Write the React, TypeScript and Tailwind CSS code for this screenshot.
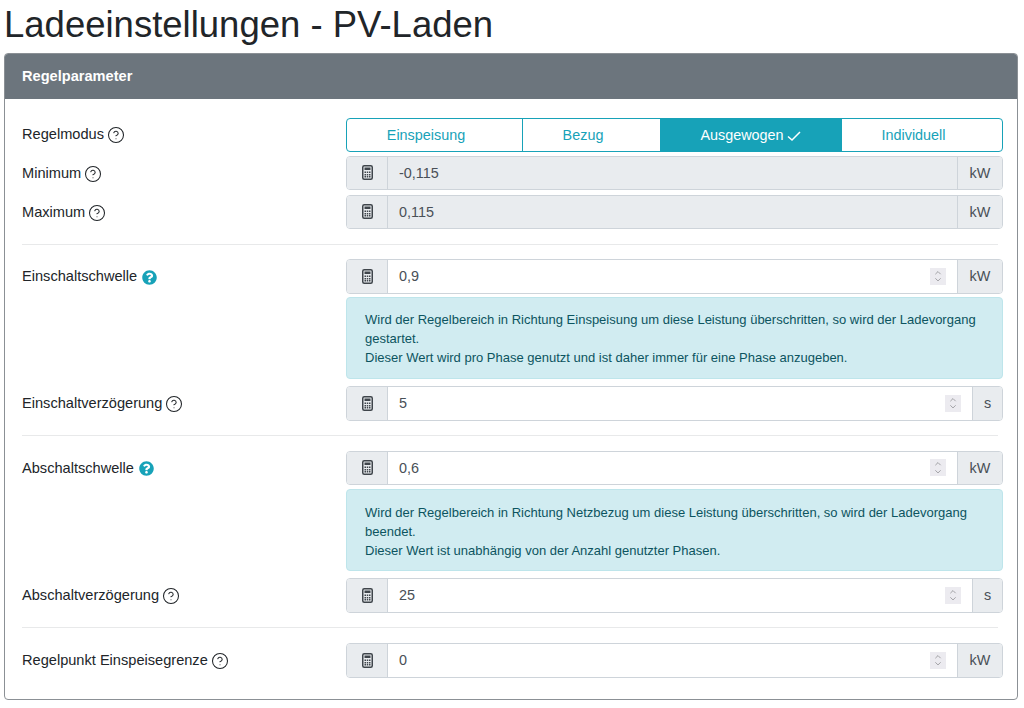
import { ChevronDown, ChevronUp, CircleHelp } from 'lucide-react';
import { FaQuestionCircle } from 'react-icons/fa';

function Calculator() {
  return (
    <svg width="11" height="15" viewBox="0 0 11 15" className="text-[#3f454b]">
      <rect x="0.75" y="0.75" width="9.5" height="13.5" rx="1.5" fill="none" stroke="currentColor" strokeWidth="1.5" />
      <rect x="2.5" y="2.5" width="6" height="2.5" fill="currentColor" />
      <path d="M2.5 6.5h1.5v1.5H2.5zM4.75 6.5h1.5v1.5h-1.5zM7 6.5h1.5v1.5H7zM2.5 9h1.5v1.5H2.5zM4.75 9h1.5v1.5h-1.5zM7 9h1.5v1.5H7zM2.5 11h1.5v1.5H2.5zM4.75 11h1.5v1.5h-1.5zM7 11h1.5v1.5H7z" fill="currentColor" />
    </svg>
  );
}

function Label({ text, active, first }: { text: string; active?: boolean; first?: boolean }) {
  return (
    <div className={`flex items-center h-[34.5px] ${first ? 'pt-0' : 'pt-[2px]'} text-[14.6px] text-[#212529] ${active ? 'gap-[5px]' : 'gap-[3px]'}`}>
      <span>{text}</span>
      {active ? (
        <FaQuestionCircle className="w-[15px] h-[15px] text-[#17a2b8]" />
      ) : (
        <CircleHelp size={18} strokeWidth={1.4} className="text-[#212529]" />
      )}
    </div>
  );
}

function Field({ value, unit, disabled }: { value: string; unit: string; disabled?: boolean }) {
  return (
    <div className="flex h-[34.5px] rounded-[4px] border border-[#ced4da] text-[14.4px] text-[#495057] overflow-hidden">
      <div className="w-[41px] shrink-0 flex items-center justify-center bg-[#e9ecef] border-r border-[#ced4da]">
        <Calculator />
      </div>
      <div className={`flex-1 flex items-center pl-[11px] pr-[11px] ${disabled ? 'bg-[#e9ecef]' : 'bg-white'}`}>
        <span className="flex-1 pt-[2px]">{value}</span>
        {!disabled && (
          <div className="w-[16px] h-[17px] bg-[#ecebf0] flex flex-col items-center justify-center text-[#6f6f73]">
            <ChevronUp size={10} strokeWidth={1.5} className="-mb-[1px]" />
            <ChevronDown size={10} strokeWidth={1.5} className="-mt-[1px]" />
          </div>
        )}
      </div>
      <div className={`${unit === 's' ? 'w-[30px]' : 'w-[45px]'} shrink-0 flex items-center justify-center pt-[2px] bg-[#e9ecef] border-l border-[#ced4da]`}>
        {unit}
      </div>
    </div>
  );
}

function Note({ lines, className }: { lines: string[]; className: string }) {
  return (
    <div className={`rounded-[4px] bg-[#d1ecf1] border border-[#bee5eb] pl-[18px] pr-[18px] pt-[12.5px] text-[13px] leading-[19px] text-[#0c5460] ${className}`}>
      {lines.map((l) => (
        <div key={l}>{l}</div>
      ))}
    </div>
  );
}

function Row({ label, active, first, className, children }: { label: string; active?: boolean; first?: boolean; className?: string; children: React.ReactNode }) {
  return (
    <div className={`grid grid-cols-[324px_657px] ${className ?? ''}`}>
      <Label text={label} active={active} first={first} />
      <div>{children}</div>
    </div>
  );
}

function Divider({ className }: { className: string }) {
  return <div className={`h-px w-[976px] bg-[#e8e9ea] ${className}`} />;
}

const modes = [
  { name: 'Einspeisung', w: 'w-[175px]' },
  { name: 'Bezug', w: 'w-[138px]' },
  { name: 'Ausgewogen', w: 'w-[181px]', on: true },
  { name: 'Individuell', w: 'flex-1' },
];

export default function App() {
  return (
    <div className="h-[708px] overflow-hidden bg-white pl-[4px] pr-[6px] font-['Liberation_Sans',Arial,sans-serif]">
      <h1 className="h-[53px] text-[36.5px] leading-[49px] text-[#212529]">Ladeeinstellungen - PV-Laden</h1>
      <section className="h-[647px] rounded-[4px] border border-[#8b9095] overflow-hidden">
        <div className="h-[45px] bg-[#6c757d] pl-[17px] flex items-center text-[14.6px] font-bold text-white">Regelparameter</div>
        <div className="pl-[17px] pt-[18.5px]">
          <Row label="Regelmodus" first>
            <div className="flex h-[34.5px] rounded-[4px] border border-[#17a2b8] overflow-hidden text-[14.4px] text-[#17a2b8]">
              {modes.map((m, i) => (
                <div
                  key={m.name}
                  className={`${m.w} flex items-center justify-center gap-[3px] pt-[2px] ${i > 0 && !m.on ? 'border-l border-[#17a2b8]' : ''} ${m.on ? 'bg-[#17a2b8] text-white' : ''}`}
                >
                  {m.name}
                  {m.on ? (
                    <svg width="14" height="12" viewBox="0 0 14 12" fill="none" stroke="currentColor" strokeWidth="1.5">
                      <path d="M1 6.5 L5 10 L13 2" />
                    </svg>
                  ) : (
                    <span className="w-[14px]" />
                  )}
                </div>
              ))}
            </div>
          </Row>
          <Row label="Minimum" className="mt-[3.5px]">
            <Field value="-0,115" unit="kW" disabled />
          </Row>
          <Row label="Maximum" className="mt-[4.5px]">
            <Field value="0,115" unit="kW" disabled />
          </Row>
          <Divider className="mt-[14.5px]" />
          <Row label="Einschaltschwelle" active className="mt-[14.5px]">
            <Field value="0,9" unit="kW" />
            <Note
              className="mt-[3px] h-[82px]"
              lines={[
                'Wird der Regelbereich in Richtung Einspeisung um diese Leistung überschritten, so wird der Ladevorgang',
                'gestartet.',
                'Dieser Wert wird pro Phase genutzt und ist daher immer für eine Phase anzugeben.',
              ]}
            />
          </Row>
          <Row label="Einschaltverzögerung" className="mt-[7.5px]">
            <Field value="5" unit="s" />
          </Row>
          <Divider className="mt-[14px]" />
          <Row label="Abschaltschwelle" active className="mt-[15px]">
            <Field value="0,6" unit="kW" />
            <Note
              className="mt-[4px] h-[81.5px]"
              lines={[
                'Wird der Regelbereich in Richtung Netzbezug um diese Leistung überschritten, so wird der Ladevorgang',
                'beendet.',
                'Dieser Wert ist unabhängig von der Anzahl genutzter Phasen.',
              ]}
            />
          </Row>
          <Row label="Abschaltverzögerung" className="mt-[7.5px]">
            <Field value="25" unit="s" />
          </Row>
          <Divider className="mt-[14.5px]" />
          <Row label="Regelpunkt Einspeisegrenze" className="mt-[15px]">
            <Field value="0" unit="kW" />
          </Row>
        </div>
      </section>
    </div>
  );
}
